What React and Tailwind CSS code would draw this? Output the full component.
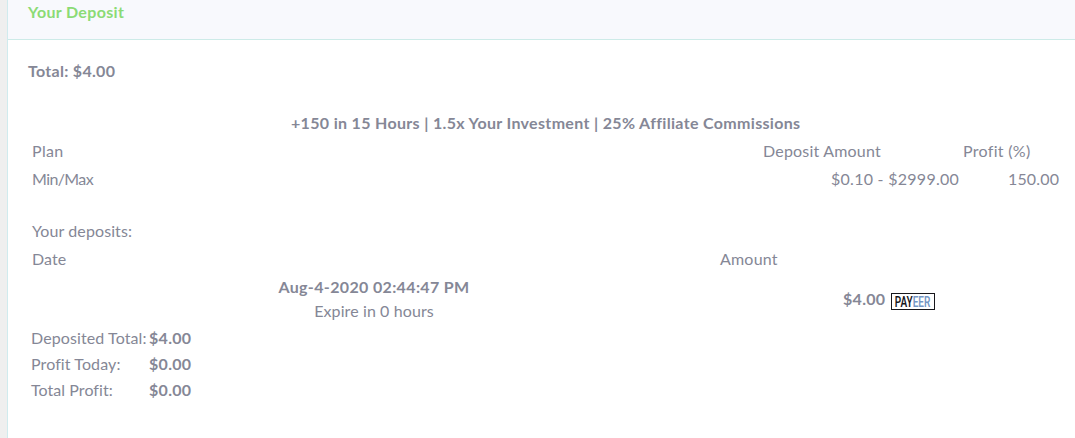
import React from "react";

const totals = [
  { label: "Deposited Total:", value: "$4.00", tracking: "tracking-[0.1px]" },
  { label: "Profit Today:", value: "$0.00", tracking: "tracking-[0.1px]" },
  { label: "Total Profit:", value: "$0.00", tracking: "tracking-[0.06px]" },
];

const PayeerBadge = () => (
  <svg className="block" width="44" height="17" viewBox="0 0 44 17" role="img" aria-label="Payeer">
    <rect x="0.5" y="0.5" width="43" height="16" fill="#fff" stroke="#17171c" />
    <text
      transform="translate(3.8 13.6) scale(0.69 1)"
      fontFamily="Roboto, 'Liberation Sans', sans-serif"
      fontSize="14.5"
      fontWeight="600"
      fill="#17171c"
    >
      PAY<tspan fill="#7597c5">EER</tspan>
    </text>
  </svg>
);

function App() {
  return (
    <div className="flex h-[438px] w-full overflow-hidden whitespace-nowrap bg-[#efefef] pl-[7px] font-['Lato','Open_Sans',sans-serif] text-base leading-6 text-[#858796]">
      <div className="flex-1 border-l border-l-[#d0ebee] bg-white">
        <div className="h-10 border-b border-b-[#cdebe8] bg-[#f8f9fd] pl-5">
          <h6 className="font-bold tracking-[0.33px] text-[#8bdb75]">Your Deposit</h6>
        </div>

        <div className="pl-5 pt-[19px]">
          <b className="block tracking-[0.3px]">Total: $4.00</b>

          {/* Plan */}
          <div className="mt-7 w-[1035px]">
            <div className="pl-[263px] font-bold tracking-[0.33px]">
              +150 in 15 Hours | 1.5x Your Investment | 25% Affiliate Commissions
            </div>
            <div className="mt-1 grid grid-cols-[731px_200px_1fr] pl-1">
              <span className="tracking-[0.35px]">Plan</span>
              <span className="tracking-[0.2px]">Deposit Amount</span>
              <span className="tracking-[0.3px]">Profit (%)</span>
            </div>
            <div className="mt-1 grid grid-cols-[799px_177px_1fr] pl-1">
              <span className="tracking-[-0.6px]">Min/Max</span>
              <span className="tracking-[0.27px]">$0.10 - $2999.00</span>
              <span className="tracking-[0.15px]">150.00</span>
            </div>
          </div>

          {/* Deposits */}
          <div className="mt-7 w-[1035px]">
            <div className="pl-1 tracking-[0.1px]">Your deposits:</div>
            <div className="mt-1 grid grid-cols-[688px_1fr] pl-1">
              <span className="tracking-[0.1px]">Date</span>
              <span className="tracking-[0.2px]">Amount</span>
            </div>
            <div className="mt-1 flex items-center">
              <div className="w-[692px] text-center">
                <b className="block tracking-[0.35px]">Aug-4-2020 02:44:47 PM</b>
                <span className="block tracking-[0.1px]">Expire in 0 hours</span>
              </div>
              <div className="flex items-center pl-[123px]">
                <b className="w-12 tracking-[0.3px]">$4.00</b>
                <div className="pt-[5px]">
                  <PayeerBadge />
                </div>
              </div>
            </div>
          </div>

          {/* Totals */}
          <div className="mt-[3px] grid grid-cols-[118px_1fr] gap-y-0.5 pl-[3px]">
            {totals.map((row) => (
              <React.Fragment key={row.label}>
                <span className={row.tracking}>{row.label}</span>
                <b className="tracking-[0.3px]">{row.value}</b>
              </React.Fragment>
            ))}
          </div>
        </div>
      </div>
    </div>
  );
}

export default App;
